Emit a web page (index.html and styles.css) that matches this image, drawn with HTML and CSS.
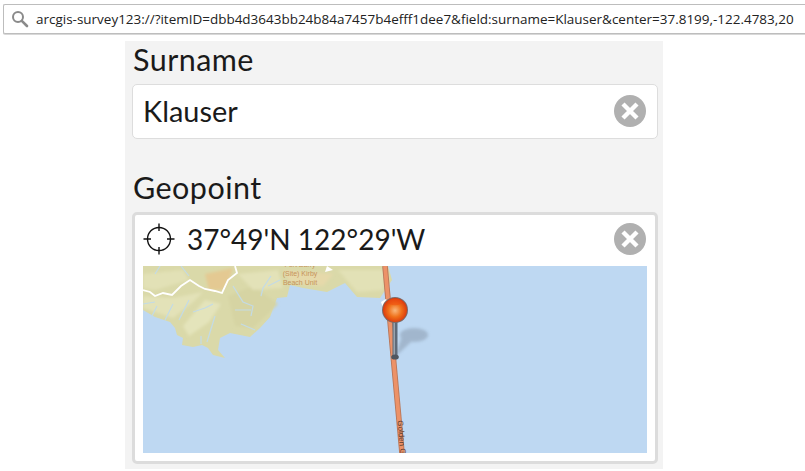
FILE: index.html
```html
<!DOCTYPE html>
<html lang="en">
<head>
<meta charset="utf-8">
<title>Survey123 link</title>
<link rel="stylesheet" href="styles.css">
</head>
<body>
<div class="addressbar">
  <svg class="search-icon" viewBox="0 0 18 18" width="18" height="18"><circle cx="7" cy="7" r="5" fill="none" stroke="#8a8a8a" stroke-width="2"/><path d="M10.8 10.8 L16 16" stroke="#8a8a8a" stroke-width="2.6" stroke-linecap="round"/></svg>
  <span class="url">arcgis-survey123://?itemID=dbb4d3643bb24b84a7457b4efff1dee7&amp;field:surname=Klauser&amp;center=37.8199,-122.4783,20</span>
</div>
<main class="form">
  <div class="label">Surname</div>
  <div class="field">
    <span class="value">Klauser</span>
    <svg class="clear" viewBox="0 0 32 32" width="32" height="32"><circle cx="16" cy="16" r="16" fill="#b0b0b0"/><path d="M9 9 L23 23 M23 9 L9 23" stroke="#fff" stroke-width="4.4"/></svg>
  </div>
  <div class="label label-geo">Geopoint</div>
  <div class="geo">
    <div class="geo-head">
      <svg class="target" viewBox="0 0 32 32" width="32" height="32"><circle cx="16" cy="16" r="11.5" fill="none" stroke="#111" stroke-width="1.4"/><path d="M16 0.5 V8 M16 24 V31.5 M0.5 16 H8 M24 16 H31.5" stroke="#111" stroke-width="1.4"/></svg>
      <span class="coords">37°49'N 122°29'W</span>
      <svg class="clear" viewBox="0 0 32 32" width="32" height="32"><circle cx="16" cy="16" r="16" fill="#b0b0b0"/><path d="M9 9 L23 23 M23 9 L9 23" stroke="#fff" stroke-width="4.4"/></svg>
    </div>
    <svg class="map" viewBox="0 0 504 187" width="504" height="187">
      <defs>
        <radialGradient id="ball" cx="0.5" cy="0.52" r="0.55">
          <stop offset="0" stop-color="#f9b77c"/>
          <stop offset="0.5" stop-color="#f0701a"/>
          <stop offset="1" stop-color="#d8300a"/>
        </radialGradient>
        <filter id="soft" x="-20%" y="-20%" width="140%" height="140%"><feGaussianBlur stdDeviation="1.4"/></filter>
        <filter id="soft2" x="-20%" y="-20%" width="140%" height="140%"><feGaussianBlur stdDeviation="0.4"/></filter>
      </defs>
      <rect width="504" height="187" fill="#bed8f2"/>
      <path d="M0 0 H245 L249 14 L237 32 L214 31 L202 17 L184 26 L160 22 L147 19 L144 31 L134 32 L127 51 L117 62 L107 71 L87 67 L77 72 L75 84 L82 92 L70 89 L65 82 L59 79 L50 81 L39 79 L40 72 L34 69 L32 62 L27 56 L12 51 L0 44 Z" fill="#dad9a9"/>
      <g filter="url(#soft)">
        <path d="M0 30 L30 32 L60 26 L50 36 L30 52 L0 42 Z" fill="#e3e2b8"/>
        <path d="M62 34 L78 38 L66 56 L46 70 L40 60 Z" fill="#e4e4bb"/>
        <path d="M85 30 L110 20 L135 38 L110 62 L92 60 Z" fill="#d6d4a3"/>
        <path d="M0 8 L40 4 L46 14 L12 24 L0 22 Z" fill="#e2e1b6"/>
        <path d="M95 8 L135 4 L140 22 L110 24 Z" fill="#e3e2b8"/>
        <path d="M140 4 L190 8 L180 20 L148 17 Z" fill="#e6d9aa"/>
        <path d="M195 4 L243 4 L240 24 L214 26 Z" fill="#e2e1b6"/>
        <path d="M62 8 L90 2 L86 14 L80 24 L66 24 Z" fill="#e4c992"/>
      </g>
      <g fill="none" stroke="#c3dbe6" stroke-width="1.2" filter="url(#soft2)">
        <path d="M0 38 L12 36 M8 52 L14 40 M22 54 L30 38 M36 54 L46 34"/>
        <path d="M50 46 L62 42 L70 38 M64 76 L72 50 M58 78 L58 70"/>
        <path d="M90 20 L100 36 L110 40 L108 50 M92 44 L108 44 M98 58 L112 64"/>
        <path d="M17 0 L12 8 M38 0 L46 10 M128 10 L120 22 L118 30 M137 14 L125 20"/>
      </g>
      <path d="M0 24 L7 26 L12 30 L20 27 L29 29 L38 20 L47 14 L56 20 L62 23 L72 25 L79 27 L85 14 L94 7 L92 0" fill="none" stroke="#fff" stroke-width="1.8"/>
      <g class="map-label">
        <text x="157" y="1" text-anchor="middle">Fort Barry</text>
        <text x="157" y="10" text-anchor="middle">(Site) Kirby</text>
        <text x="157" y="18.5" text-anchor="middle">Beach Unit</text>
      </g>
      <path d="M184 0 L190 4 L182 6 Z" fill="#fff"/>
      <path d="M242 0 L259 187" stroke="#b9775a" stroke-width="5.6"/>
      <path d="M242 0 L259 187" stroke="#ec9268" stroke-width="3.8"/>
      <text class="bridge-label" transform="translate(254.5 154.5) rotate(85)">Golden G</text>
      <path d="M238 36 L243 33 L246 38 L240 42 Z" fill="#fff"/>
      <g filter="url(#soft)" fill="#8696a9" opacity="0.5">
        <ellipse cx="271" cy="69" rx="14" ry="7"/>
        <path d="M252 91 L259 70 L268 76 Z"/>
      </g>
      <rect x="249.5" y="55" width="5" height="36" fill="#5f6a78"/>
      <rect x="250.5" y="55" width="1.5" height="36" fill="#9aa3ad"/>
      <ellipse cx="252" cy="91" rx="3.8" ry="2.6" fill="#4f5660"/>
      <circle cx="252" cy="44" r="13" fill="#7d6a66"/>
      <circle cx="252" cy="44" r="12" fill="url(#ball)"/>
      <ellipse cx="252" cy="36" rx="7" ry="3.2" fill="#f04a10" opacity="0.5"/>
    </svg>
  </div>
</main>
</body>
</html>
```
FILE: styles.css
```css
html, body { margin: 0; padding: 0; background: #fff; }
body { width: 805px; height: 471px; overflow: hidden; font-family: "Lato", "Noto Sans", sans-serif; color: #1a1a1a; }
.addressbar {
  box-sizing: border-box; height: 30px; margin: 4px 0 7px 3px; display: flex; align-items: center;
  gap: 7px; padding-left: 7px; border: 1px solid #bdbdbd; border-right: 0; background: #fff;
  border-radius: 2px 0 0 2px; box-shadow: 0 1px 0 #d8d8d8;
}
.search-icon { flex: none; }
.url { font-size: 13.48px; font-family: "Open Sans", "Noto Sans", sans-serif; color: #222; white-space: nowrap; }
.form {
  box-sizing: border-box; width: 538px; height: 428px; margin-left: 125px; padding: 0 5px 0 7px;
  background: #f3f3f3; overflow: hidden;
}
.label { font-size: 30.5px; line-height: 36px; height: 43px; padding-left: 1px; letter-spacing: 0.45px; }
.label-geo { margin-top: 30px; }
.field {
  box-sizing: border-box; height: 55px; display: flex; align-items: center; justify-content: space-between;
  padding: 0 11px 2px 10px; background: #fff; border: 1.5px solid #ddd; border-radius: 5px;
}
.value { font-size: 28.9px; line-height: 32px; }
.geo {
  box-sizing: border-box; width: 526px; height: 252px; padding: 0 8px 8px 8px; background: #fff;
  border: 3px solid #dcdcdc; border-radius: 5px; display: flex; flex-direction: column;
}
.geo-head { height: 51px; flex: none; display: flex; align-items: center; gap: 12px; padding: 0 1px 4px 0; box-sizing: border-box; }
.coords { font-size: 28px; line-height: 32px; flex: 1; }
.clear { flex: none; }
.target { flex: none; }
.map { display: block; flex: none; }
.map-label { font-family: "Liberation Sans", sans-serif; font-size: 7px; fill: #c6935a; }
.bridge-label { font-family: "Liberation Sans", sans-serif; font-size: 8px; fill: #5a3c30; }
```
